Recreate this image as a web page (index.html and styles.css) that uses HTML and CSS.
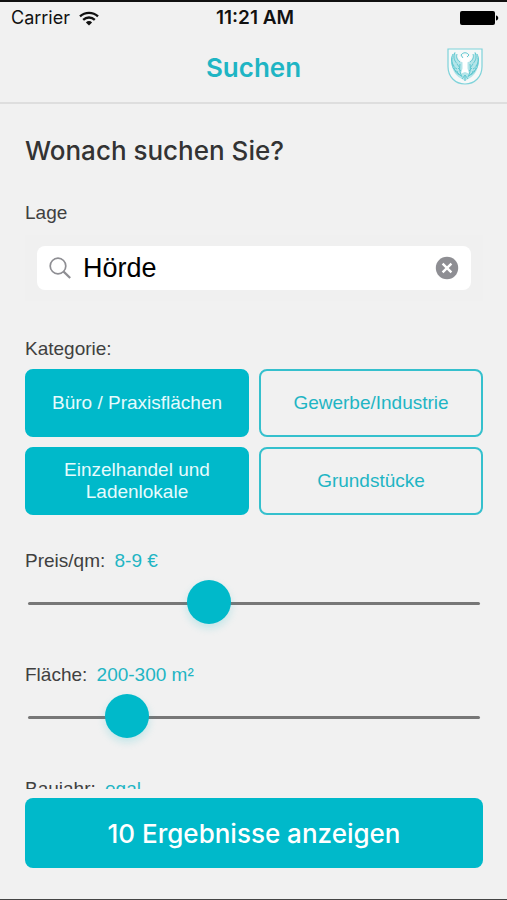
FILE: index.html
```html
<!DOCTYPE html>
<html lang="de">
<head>
    <meta charset="UTF-8">
    <meta name="viewport" content="width=device-width, initial-scale=1.0">
    <title>Suchen</title>
    <link rel="stylesheet" href="styles.css">
</head>
<body>
    <div class="screen">
        <div class="status-bar">
            <div class="carrier">
                <span>Carrier</span>
                <svg width="20" height="15" viewBox="0 0 20 15" fill="none" stroke="#111" stroke-width="2.3">
                    <path d="M1 5.4a13 13 0 0 1 18 0"/>
                    <path d="M4.2 8.8a8.4 8.4 0 0 1 11.6 0"/>
                    <path d="M10 14.6l-3.1-3.2a4.4 4.4 0 0 1 6.2 0z" fill="#111" stroke="none"/>
                </svg>
            </div>
            <div class="time">11:21 AM</div>
            <div class="battery">
                <svg width="40" height="16" viewBox="0 0 40 16">
                    <rect x="1" y="1" width="35" height="14" rx="2" fill="#000"/>
                    <path d="M37 5.5c3 .6 3 4.4 0 5z" fill="#000"/>
                </svg>
            </div>
        </div>

        <header class="navbar">
            <h1>Suchen</h1>
            <svg class="crest" width="36" height="40" viewBox="0 0 36 40" fill="none" stroke="#7fd3da">
                <path d="M1 1h34v17.5c0 10-7 17.5-17 17.5s-17-7.5-17-17.5z" fill="#f6f8f8" stroke-width="1.2"/>
                <!-- eagle: wings, feathers, head, tail -->
                <path d="M8 4c-4 4-5 9-3 14 1 6 5 11 10 13l3 2 3-2c5-2 9-7 10-13 2-5 1-10-3-14-1 4-3 8-6 10h-8c-3-2-5-6-6-10z" fill="#b5e5e9" stroke="none"/>
                <g stroke="#62c8d1" stroke-width="1">
                    <path d="M6 6c-2 4-2 8 1 12M8 4.5c-2 4-1 8 2 11M10 6c-1 3 0 6 3 8M5 10c-1 5 1 9 5 11M5 15c0 5 3 8 6 9M7 20c1 4 3 6 6 7M10 16l3 4M11 20l3 3M10 24l4 4M13 16c-1 5 0 9 2 13"/>
                    <path d="M30 6c2 4 2 8-1 12M28 4.5c2 4 1 8-2 11M26 6c1 3 0 6-3 8M31 10c1 5-1 9-5 11M31 15c0 5-3 8-6 9M29 20c-1 4-3 6-6 7M26 16l-3 4M25 20l-3 3M26 24l-4 4M23 16c1 5 0 9-2 13"/>
                    <path d="M14 7c2-3 6-3 8 0l-2 2M14 7l2 3M15 31l3-4 3 4M18 27v6"/>
                </g>
                <path d="M16.5 8c1-2 4-1 3 2.5l5-2-4 6v6l1.500 5-4-1.500-4 1.500 1.500-5v-6l-4-6 5 2z" fill="#fff" stroke="none"/>
            </svg>
        </header>

        <main class="content">
            <h2>Wonach suchen Sie?</h2>

            <label class="label" for="lage">Lage</label>
            <div class="search-area">
                <div class="search-box">
                    <svg width="22" height="22" viewBox="0 0 22 22" fill="none" stroke="#8e8e93" stroke-width="1.7">
                        <circle cx="9" cy="9" r="7.8"/>
                        <path d="M14.6 14.6l6.6 6.4" stroke-width="2.2"/>
                    </svg>
                    <input type="text" id="lage" value="Hörde">
                    <button type="button" class="clear-btn" aria-label="Eingabe löschen">
                        <svg width="24" height="24" viewBox="0 0 24 24">
                            <circle cx="12" cy="12" r="11.2" fill="#8e8e93"/>
                            <path d="M7.6 7.6l8.8 8.8M16.4 7.6l-8.8 8.8" stroke="#fff" stroke-width="2.4"/>
                        </svg>
                    </button>
                </div>
            </div>

            <div class="label" id="kategorie">Kategorie:</div>
            <div class="categories" role="group" aria-labelledby="kategorie">
                <button type="button" class="category active" aria-pressed="true">Büro / Praxisflächen</button>
                <button type="button" class="category" aria-pressed="false">Gewerbe/Industrie</button>
                <button type="button" class="category active" aria-pressed="true">Einzelhandel und Ladenlokale</button>
                <button type="button" class="category" aria-pressed="false">Grundstücke</button>
            </div>

            <div class="filter">
                <label class="label" for="preis">Preis/qm: <span class="value">8-9 €</span></label>
                <input type="range" id="preis" min="0" max="18" value="7">
            </div>
            <div class="filter">
                <label class="label" for="flaeche">Fläche: <span class="value">200-300 m²</span></label>
                <input type="range" id="flaeche" min="0" max="16" value="3">
            </div>
            <div class="filter">
                <label class="label" for="baujahr">Baujahr: <span class="value">egal</span></label>
                <input type="range" id="baujahr" min="0" max="10" value="0">
            </div>
        </main>

        <footer class="footer">
            <button type="submit" class="submit-btn">10 Ergebnisse anzeigen</button>
        </footer>
    </div>
</body>
</html>
```
FILE: styles.css
```css
* {
    margin: 0;
    padding: 0;
    box-sizing: border-box;
}

body {
    font-family: 'Helvetica Neue', 'Liberation Sans', Arial, sans-serif;
    font-size: 19px;
    line-height: 24px;
    background: #f1f1f1;
    color: #404040;
}

button,
input {
    font-family: inherit;
    border: none;
    background: none;
}

.screen {
    height: 100vh;
    display: flex;
    flex-direction: column;
    border-top: 2px solid #111;
    border-bottom: 1px solid #444;
}

/* status bar */
.status-bar {
    display: grid;
    grid-template-columns: 1fr auto 1fr;
    align-items: center;
    height: 32px;
    padding: 0 8px 0 11px;
    font-family: Inter, sans-serif;
    font-size: 18px;
    color: #111;
}

.carrier {
    display: flex;
    align-items: center;
    gap: 9px;
}

.time {
    font-size: 19px;
    font-weight: 600;
}

.battery {
    display: flex;
    justify-content: flex-end;
}

/* title bar */
.navbar {
    display: grid;
    grid-template-columns: 1fr auto 1fr;
    align-items: center;
    height: 70px;
    padding: 0 24px;
    border-bottom: 2px solid #dedede;
}

.navbar h1 {
    grid-column: 2;
    font-family: Inter, sans-serif;
    font-size: 26px;
    font-weight: 600;
    color: #1fb5c4;
}

.crest {
    justify-self: end;
}

/* form */
.content {
    flex: 1;
    min-height: 0;
    overflow-y: auto;
    scrollbar-width: none;
    padding: 31px 24px 0 25px;
}

.content h2 {
    font-family: Inter, sans-serif;
    font-size: 26px;
    line-height: 32px;
    font-weight: 500;
    color: #333;
    margin-bottom: 34px;
}

.label {
    display: block;
}

.value {
    margin-left: 4px;
    color: #1fb5c4;
}

.search-area {
    margin: 10px 0 36px;
    padding: 11px 12px;
    background: #f0f0f0;
}

.search-box {
    display: flex;
    align-items: center;
    gap: 12px;
    height: 44px;
    padding: 0 12px;
    border-radius: 8px;
    background: #fff;
}

.search-box input {
    flex: 1;
    min-width: 0;
    font-size: 27px;
    color: #000;
    outline: none;
}

.clear-btn {
    display: flex;
    cursor: pointer;
}

.categories {
    display: grid;
    grid-template-columns: 1fr 1fr;
    grid-auto-rows: 68px;
    gap: 10px;
    margin: 8px 0 34px;
}

.category {
    padding: 0 20px;
    border: 2px solid #35c0cd;
    border-radius: 8px;
    font-size: 19px;
    line-height: 22px;
    color: #1fb5c4;
    cursor: pointer;
}

.category.active {
    background: #00b9ca;
    border-color: #00b9ca;
    color: #e6fbfd;
}

.filter {
    margin-bottom: 38px;
    padding-right: 3px;
}

/* sliders */
input[type="range"] {
    -webkit-appearance: none;
    appearance: none;
    display: block;
    width: calc(100% - 3px);
    height: 44px;
    margin: 8px 0 0 3px;
}

input[type="range"]::-webkit-slider-runnable-track {
    height: 3px;
    border-radius: 2px;
    background: #777;
}

input[type="range"]::-webkit-slider-thumb {
    -webkit-appearance: none;
    width: 44px;
    height: 44px;
    margin-top: -22px;
    border-radius: 50%;
    background: #00b9ca;
    box-shadow: 0 4px 8px rgba(0, 185, 202, 0.2);
}

.footer {
    padding: 9px 24px 31px 25px;
}

.submit-btn {
    display: block;
    width: 100%;
    height: 70px;
    border-radius: 8px;
    background: #00b9ca;
    color: #fff;
    font-family: Inter, sans-serif;
    font-size: 26px;
    font-weight: 500;
    cursor: pointer;
}
```
